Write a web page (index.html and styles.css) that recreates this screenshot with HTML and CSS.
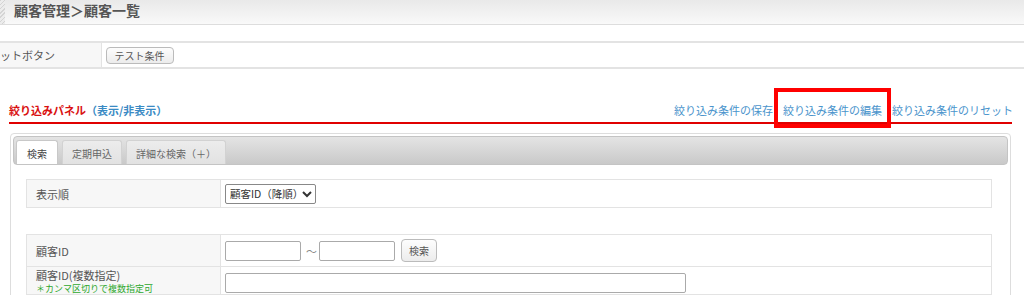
FILE: index.html
```html
<!DOCTYPE html>
<html lang="ja">
<head>
    <meta charset="UTF-8">
    <meta name="viewport" content="width=device-width, initial-scale=1.0">
    <title>顧客一覧</title>
    <link rel="stylesheet" href="styles.css">
</head>
<body>
    <div class="page-header">
        <div class="header-mark"></div>
        <h1>顧客管理＞顧客一覧</h1>
    </div>

    <table class="button-table">
        <tr>
            <th>ットボタン</th>
            <td><button class="btn-small">テスト条件</button></td>
        </tr>
    </table>

    <div class="panel-heading">
        <div class="panel-title">絞り込みパネル<span class="toggle">（表示/非表示）</span></div>
        <div class="panel-links">
            <a href="#">絞り込み条件の保存</a>
            <a href="#" class="highlight">絞り込み条件の編集</a>
            <a href="#">絞り込み条件のリセット</a>
        </div>
    </div>

    <div class="panel">
        <div class="tab-bar">
            <div class="tab active">検索</div>
            <div class="tab">定期申込</div>
            <div class="tab">詳細な検索（＋）</div>
        </div>

        <div class="panel-body">
            <table class="search-table">
                <tr>
                    <th>表示順</th>
                    <td>
                        <select class="sort-select">
                            <option>顧客ID（降順）</option>
                        </select>
                    </td>
                </tr>
            </table>

            <table class="search-table second">
                <tr class="row-tall">
                    <th>顧客ID</th>
                    <td>
                        <div class="range">
                            <input type="text" class="input-short">
                            <span class="tilde">～</span>
                            <input type="text" class="input-short">
                            <button class="btn-small btn-search">検索</button>
                        </div>
                    </td>
                </tr>
                <tr>
                    <th>顧客ID(複数指定)<span class="note">＊カンマ区切りで複数指定可</span></th>
                    <td><input type="text" class="input-long"></td>
                </tr>
            </table>
        </div>
    </div>
</body>
</html>
```

FILE: styles.css
```css
* {
    box-sizing: border-box;
    margin: 0;
    padding: 0;
}

body {
    font-family: "Noto Sans CJK JP", "Noto Sans", sans-serif;
    font-size: 11px;
    color: #555;
    background-color: white;
    overflow: hidden;
    height: 295px;
}

.page-header {
    display: flex;
    height: 25px;
    border-bottom: 1px solid #ddd;
    background: linear-gradient(#e9e9e9, #f9f9f9);
}

.header-mark {
    width: 5px;
    background: repeating-linear-gradient(135deg, #d4d4d4 0 1px, #ececec 1px 3px);
}

.page-header h1 {
    margin-left: 9px;
    font-size: 14px;
    line-height: 20px;
    font-weight: bold;
    color: #555;
}

.button-table {
    margin-top: 16px;
    width: 100%;
    border-collapse: collapse;
    border-top: 2px solid #e3e3e3;
    border-bottom: 2px solid #e3e3e3;
}

.button-table th {
    width: 101px;
    height: 26px;
    background-color: #f7f7f7;
    border-right: 1px solid #e3e3e3;
    text-align: left;
    font-weight: normal;
    white-space: nowrap;
}

.button-table td {
    padding-left: 4px;
}

.btn-small {
    font-family: inherit;
    font-size: 10px;
    color: #555;
    height: 17px;
    padding: 0 8px;
    border: 1px solid #bbb;
    border-radius: 4px;
    background: linear-gradient(#fdfdfd, #ececec);
    line-height: 15px;
}

.panel-heading {
    display: flex;
    justify-content: space-between;
    align-items: flex-end;
    margin: 33px 12px 0 9px;
    padding-bottom: 4px;
    border-bottom: 2px solid #e00000;
}

.panel-title {
    font-weight: bold;
    color: #d91010;
    line-height: 16px;
}

.toggle {
    color: #3a8ac4;
}

.panel-links {
    display: flex;
    gap: 10px;
    line-height: 16px;
    margin-right: -1px;
}

.panel-links a {
    color: #4a94cc;
    text-decoration: none;
}

.highlight {
    position: relative;
}

.highlight::after {
    content: "";
    position: absolute;
    left: -9px;
    right: -9px;
    top: -14px;
    bottom: -10px;
    border: 4px solid #f00;
}

.panel {
    margin: 9px 13px 0 10px;
    border: 1px solid #ddd;
    border-radius: 4px;
    padding: 2px;
    height: 170px;
}

.tab-bar {
    display: flex;
    gap: 4px;
    height: 29px;
    padding: 3px 0 0 2px;
    border: 1px solid #c4c4c4;
    border-radius: 4px;
    background: linear-gradient(#e4e4e4, #c9c9c9);
}

.tab {
    padding: 0 9px;
    font-size: 10px;
    line-height: 25px;
    color: #666;
    background: linear-gradient(#ececec, #e2e2e2);
    border: 1px solid #d2d2d2;
    border-bottom: none;
    border-radius: 3px 3px 0 0;
}

.tab.active {
    padding: 0 10px;
    color: #444;
    background: white;
    border-color: #c8c8c8;
}

.panel-body {
    padding: 14px 16px 0 13px;
}

.search-table {
    width: 100%;
    border-collapse: collapse;
    border: 1px solid #e3e3e3;
}

.search-table th,
.search-table td {
    border: 1px solid #e3e3e3;
}

.search-table th {
    width: 194px;
    height: 28px;
    padding-left: 9px;
    background-color: #f7f7f7;
    text-align: left;
    font-weight: normal;
    vertical-align: middle;
}

.search-table td {
    padding-left: 4px;
}

.search-table.second {
    margin-top: 26px;
}

.row-tall th {
    height: 32px;
}

.sort-select {
    font-family: inherit;
    font-size: 10.5px;
    color: #333;
    width: 91px;
    height: 20px;
    border: 1px solid #888;
    border-radius: 2px;
    background: white;
    display: block;
}

.range {
    display: flex;
    align-items: center;
}

.input-short,
.input-long {
    height: 20px;
    border: 1px solid #aaa;
    border-radius: 2px;
}

.input-short {
    width: 76px;
}

.input-long {
    width: 461px;
    display: block;
    margin-top: 5px;
}

.tilde {
    margin: 0 2px 0 5px;
    color: #888;
}

.btn-search {
    height: 23px;
    margin-left: 6px;
    padding: 0 7px;
}

.note {
    display: block;
    color: #2ea82e;
    font-size: 9px;
    line-height: 11px;
}
```
